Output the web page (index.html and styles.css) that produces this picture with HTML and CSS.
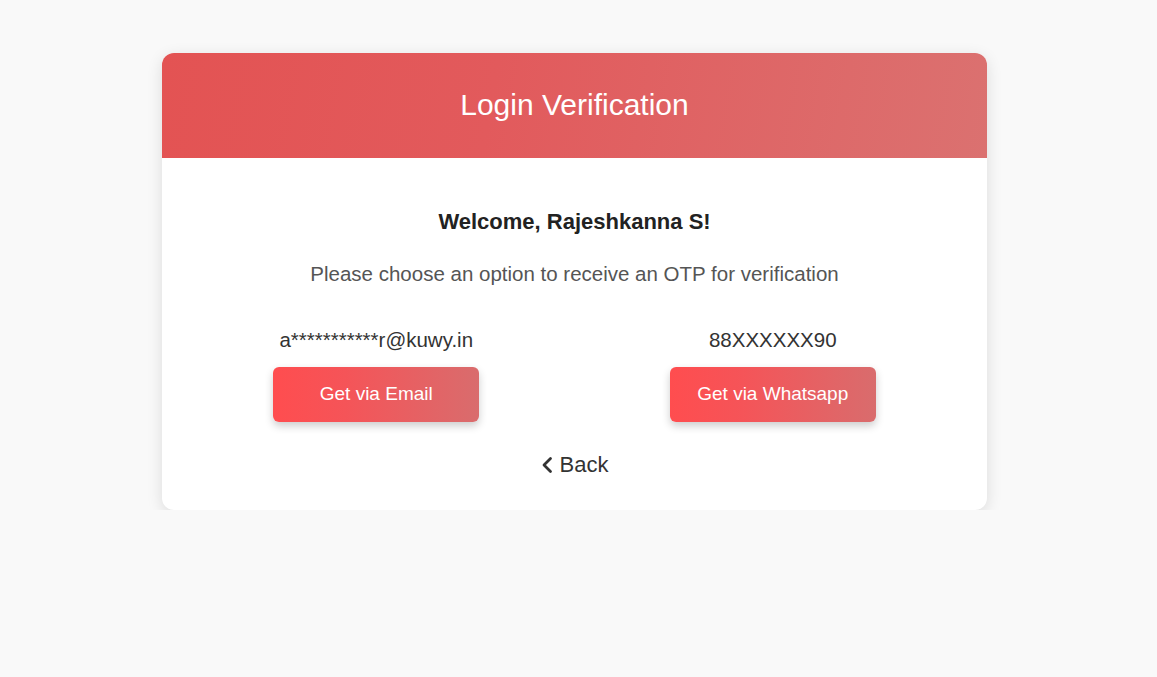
FILE: index.html
```html
<!DOCTYPE html>
<html>
<head>
<meta charset="utf-8">
<link rel="stylesheet" href="styles.css">
</head>
<body>
<div class="page">
  <div class="card">
    <div class="card-header">Login Verification</div>
    <div class="card-body">
      <div class="welcome">Welcome, Rajeshkanna S!</div>
      <div class="subtitle">Please choose an option to receive an OTP for verification</div>
      <div class="options">
        <div class="option">
          <div class="contact">a***********r@kuwy.in</div>
          <button class="btn">Get via Email</button>
        </div>
        <div class="option">
          <div class="contact">88XXXXXX90</div>
          <button class="btn">Get via Whatsapp</button>
        </div>
      </div>
      <div class="back">
        <svg class="chev" width="12" height="18" viewBox="0 0 12 18"><polyline points="9.5,2.5 3,9 9.5,15.5" fill="none" stroke="#333" stroke-width="2.8" stroke-linecap="round" stroke-linejoin="round"/></svg>
        <span>Back</span>
      </div>
    </div>
  </div>
</div>
</body>
</html>
```
FILE: styles.css
```css
html, body {
  margin: 0;
  padding: 0;
  background: #f9f9f9;
  font-family: "Liberation Sans", Arial, sans-serif;
}
.page {
  display: flex;
  justify-content: center;
  padding: 53px 8px 0 0;
}
.card {
  width: 825px;
  background: #fff;
  border-radius: 12px;
  overflow: hidden;
  box-shadow: 0 4px 16px rgba(0,0,0,0.12);
}
.card-header {
  height: 105px;
  box-sizing: border-box;
  padding-bottom: 2px;
  display: flex;
  align-items: center;
  justify-content: center;
  color: #fff;
  font-size: 30px;
  background: linear-gradient(100deg, #e35353 0%, #e25a5c 40%, #db7170 100%);
}
.card-body {
  padding: 51px 16px 32px;
  text-align: center;
}
.welcome {
  font-size: 22px;
  font-weight: bold;
  color: #222;
  line-height: 26px;
}
.subtitle {
  margin-top: 27px;
  font-size: 20.5px;
  line-height: 24px;
  color: #555;
}
.options {
  margin-top: 42px;
  display: grid;
  grid-template-columns: 1fr 1fr;
}
.option {
  display: flex;
  flex-direction: column;
  align-items: center;
}
.contact {
  font-size: 20.5px;
  line-height: 24px;
  color: #333;
}
.btn {
  margin-top: 15px;
  width: 206px;
  height: 55px;
  padding-bottom: 2px;
  border: none;
  border-radius: 6px;
  color: #fff;
  font-family: "Liberation Sans", Arial, sans-serif;
  font-size: 19px;
  background: linear-gradient(90deg, #ff4d4f 0%, #f55458 35%, #d96c6d 100%);
  box-shadow: 0 4px 8px rgba(0,0,0,0.2);
}
.back {
  margin-top: 30px;
  display: flex;
  justify-content: center;
  align-items: center;
  gap: 7px;
  font-size: 22px;
  line-height: 26px;
  color: #333;
}
.chev {
  display: block;
}
```
